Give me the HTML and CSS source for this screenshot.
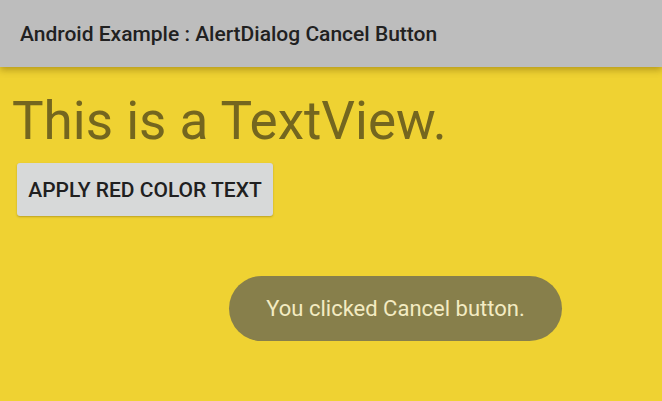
FILE: index.html
```html
<!DOCTYPE html>
<html lang="en">
<head>
  <meta charset="UTF-8">
  <title>Android Example : AlertDialog Cancel Button</title>
  <link rel="stylesheet" href="styles.css">
</head>
<body>
  <header class="toolbar">
    <h1>Android Example : AlertDialog Cancel Button</h1>
  </header>
  <main class="content">
    <p class="text-view">This is a TextView.</p>
    <button class="btn" type="button">APPLY RED COLOR TEXT</button>
    <div class="toast-wrap">
      <div class="toast">You clicked Cancel button.</div>
    </div>
  </main>
</body>
</html>
```

FILE: styles.css
```css
html, body {
  margin: 0;
  padding: 0;
  height: 100%;
}
body {
  background: #efd232;
  font-family: Roboto, 'Noto Sans', Arial, sans-serif;
  overflow: hidden;
}
.toolbar {
  background: #bdbdbd;
  height: 67px;
  display: flex;
  align-items: center;
  padding: 0 20px;
  box-shadow: 0 3px 7px rgba(110, 85, 0, 0.45);
  position: relative;
  z-index: 1;
}
.toolbar h1 {
  margin: 0;
  font-size: 21px;
  font-weight: 500;
  color: #212121;
}
.content {
  display: flex;
  flex-direction: column;
  align-items: flex-start;
  padding: 0 12px;
}
.text-view {
  margin: 22px 0 0 0;
  font-size: 53px;
  line-height: 64px;
  color: #74661f;
}
.btn {
  margin: 10px 0 0 5px;
  width: 256px;
  height: 53px;
  background: #d7d9d9;
  border: none;
  border-radius: 3px;
  box-shadow: 0 1px 2px rgba(90, 70, 0, 0.35);
  font-family: inherit;
  font-size: 21px;
  font-weight: 500;
  color: #202020;
  padding: 0;
}
.toast-wrap {
  display: flex;
  justify-content: center;
  width: 100%;
  margin-top: 60px;
  padding-left: 129px;
  box-sizing: border-box;
}
.toast {
  background: #877f4b;
  color: #f3ebc2;
  height: 65px;
  padding: 0 37px;
  border-radius: 33px;
  display: flex;
  align-items: center;
  font-size: 22px;
}
```
